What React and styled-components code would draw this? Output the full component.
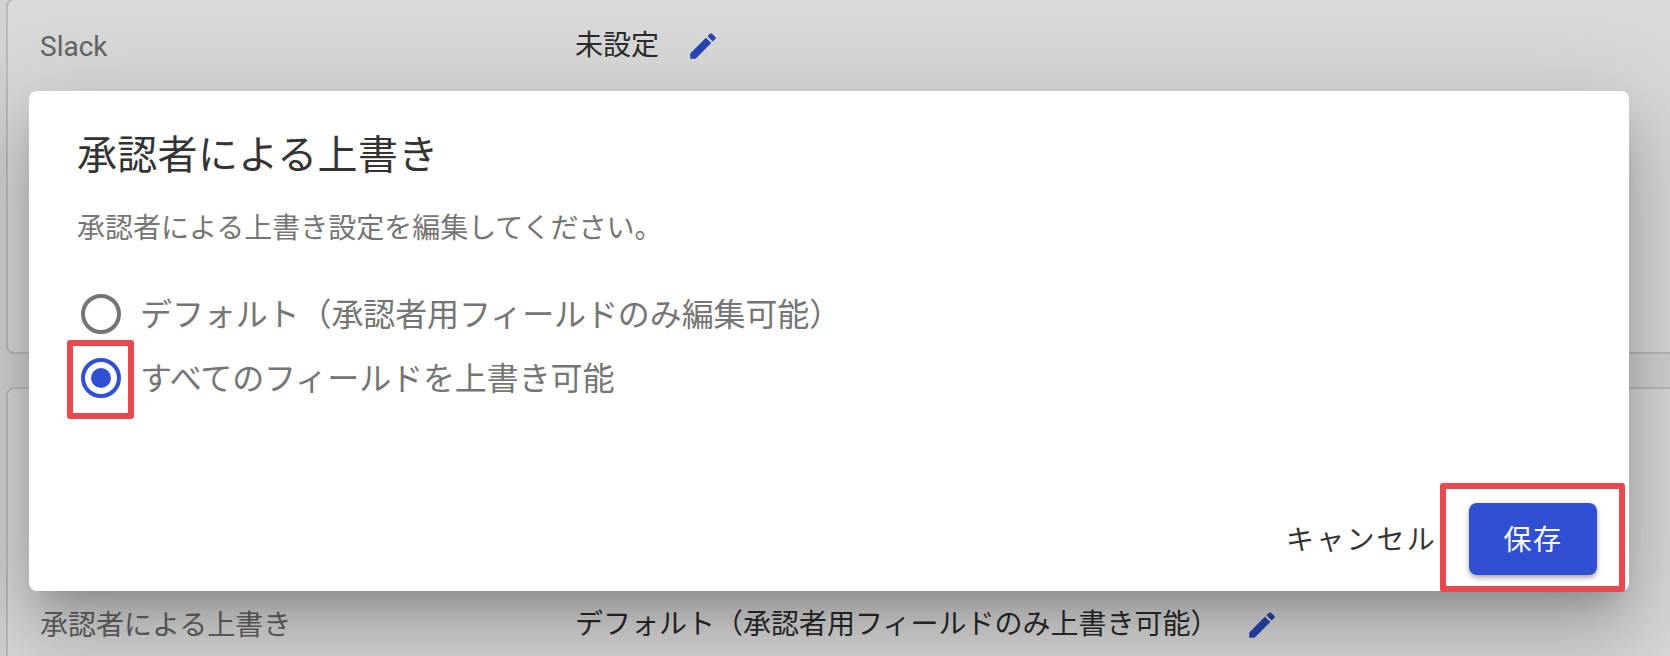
import React from 'react'
import styled, { createGlobalStyle } from 'styled-components'

const GlobalStyle = createGlobalStyle`
  html, body {
    margin: 0;
    padding: 0;
    background: #f6f7fa;
  }
  * {
    box-sizing: border-box;
  }
  body {
    font-family: Roboto, 'Noto Sans CJK JP', sans-serif;
  }
`

const EditIcon = () => (
  <svg width='34' height='34' viewBox='0 0 24 24' fill='currentColor'>
    <path d='M3 17.25V21h3.75L17.81 9.94l-3.75-3.75L3 17.25zM20.71 7.04c.39-.39.39-1.02 0-1.41l-2.34-2.34a.9959.9959 0 0 0-1.41 0l-1.83 1.83 3.75 3.75 1.83-1.83z' />
  </svg>
)

export default function App() {
  return (
    <>
      <GlobalStyle />
      <Page>
        <TopCard>
          <Row>
            <Label>Slack</Label>
            <Value>
              未設定
              <EditButton>
                <EditIcon />
              </EditButton>
            </Value>
          </Row>
        </TopCard>
        <BottomCard>
          <Row>
            <Label>承認者による上書き</Label>
            <Value>
              デフォルト（承認者用フィールドのみ上書き可能）
              <EditButton>
                <EditIcon />
              </EditButton>
            </Value>
          </Row>
        </BottomCard>

        <Overlay>
          <Dialog>
            <Title>承認者による上書き</Title>
            <Description>承認者による上書き設定を編集してください。</Description>
            <RadioGroup>
              <RadioRow>
                <Radio />
                <RadioText>デフォルト（承認者用フィールドのみ編集可能）</RadioText>
              </RadioRow>
              <RadioRow>
                <Radio $checked />
                <RadioText>すべてのフィールドを上書き可能</RadioText>
              </RadioRow>
            </RadioGroup>
            <Actions>
              <CancelButton>キャンセル</CancelButton>
              <SaveButton>保存</SaveButton>
            </Actions>
            <RadioHighlight />
            <SaveHighlight />
          </Dialog>
        </Overlay>
      </Page>
    </>
  )
}

const Page = styled.div`
  position: relative;
  height: 656px;
  overflow: hidden;
  display: flex;
  flex-direction: column;
  gap: 33px;
  padding-left: 6px;
  background: #f6f7fa;
`

const TopCard = styled.section`
  flex: 0 0 356px;
  margin-top: -2px;
  margin-right: -10px;
  background: #fff;
  border: 2px solid #dcdcdc;
  border-radius: 8px;
  padding-top: 22px;
`

const BottomCard = styled.section`
  flex: 0 0 320px;
  margin-right: -10px;
  background: #fff;
  border: 2px solid #dcdcdc;
  border-radius: 8px;
  padding-top: 212px;
`

const Row = styled.div`
  display: grid;
  grid-template-columns: 535px 1fr;
  padding-left: 32px;
`

const Label = styled.div`
  font-size: 28px;
  line-height: 42px;
  padding-top: 4px;
  color: #757575;
`

const Value = styled.div`
  display: flex;
  align-items: center;
  height: 42px;
  font-size: 28px;
  color: #333;
`

const EditButton = styled.span`
  display: inline-flex;
  margin: 5px 0 0 27px;
  color: #304fd3;
`

const Overlay = styled.div`
  position: absolute;
  inset: 0;
  padding: 91px 41px 0 29px;
  background: rgba(0, 0, 0, 0.15);
`

const Dialog = styled.div`
  position: relative;
  height: 500px;
  background: #fff;
  border-radius: 8px;
  box-shadow: 0 22px 30px -14px rgba(0, 0, 0, 0.2), 0 48px 76px 6px rgba(0, 0, 0, 0.14),
    0 18px 92px 16px rgba(0, 0, 0, 0.12);
  display: flex;
  flex-direction: column;
`

const Title = styled.h2`
  margin: 0;
  padding: 33px 48px 20px;
  font-size: 40px;
  line-height: 64px;
  font-weight: 400;
  letter-spacing: 0.3px;
  color: #333;
`

const Description = styled.p`
  margin: 0;
  padding: 0 48px;
  font-size: 28px;
  line-height: 42px;
  color: #757575;
`

const RadioGroup = styled.div`
  display: flex;
  flex-direction: column;
  padding: 32px 48px 0;
`

const RadioRow = styled.label`
  display: flex;
  align-items: center;
  gap: 19px;
  height: 64px;
  font-size: 32px;
  letter-spacing: -0.1px;
  color: #757575;
`

const RadioText = styled.span`
  padding-bottom: 4px;
`

const Radio = styled.span`
  position: relative;
  flex: 0 0 40px;
  width: 40px;
  height: 40px;
  margin-left: 4px;
  border-radius: 50%;
  border: 4px solid ${(p) => (p.$checked ? '#304fd3' : '#757575')};

  &::after {
    content: '';
    display: ${(p) => (p.$checked ? 'block' : 'none')};
    position: absolute;
    inset: 6px;
    border-radius: 50%;
    background: #304fd3;
  }
`

const Actions = styled.div`
  margin-top: auto;
  display: flex;
  align-items: center;
  justify-content: flex-end;
  gap: 32px;
  padding: 0 32px 16px;
`

const CancelButton = styled.button`
  border: 0;
  padding: 0 0 2px;
  background: none;
  font-family: inherit;
  font-size: 28px;
  letter-spacing: 2.2px;
  color: #333;
`

const SaveButton = styled.button`
  width: 128px;
  height: 72px;
  border: 0;
  border-radius: 8px;
  padding: 0 0 2px;
  background: #304fd3;
  box-shadow: 0 2px 4px -1px rgba(0, 0, 0, 0.2), 0 4px 5px 0 rgba(0, 0, 0, 0.14),
    0 1px 10px 0 rgba(0, 0, 0, 0.12);
  font-family: inherit;
  font-size: 28px;
  letter-spacing: 1.5px;
  color: #fff;
`

const Highlight = styled.div`
  position: absolute;
  border: 6px solid #e8494f;
  border-radius: 3px;
  pointer-events: none;
`

const RadioHighlight = styled(Highlight)`
  left: 38px;
  top: 249px;
  width: 67px;
  height: 79px;
`

const SaveHighlight = styled(Highlight)`
  left: 1411px;
  top: 392px;
  width: 185px;
  height: 109px;
`
